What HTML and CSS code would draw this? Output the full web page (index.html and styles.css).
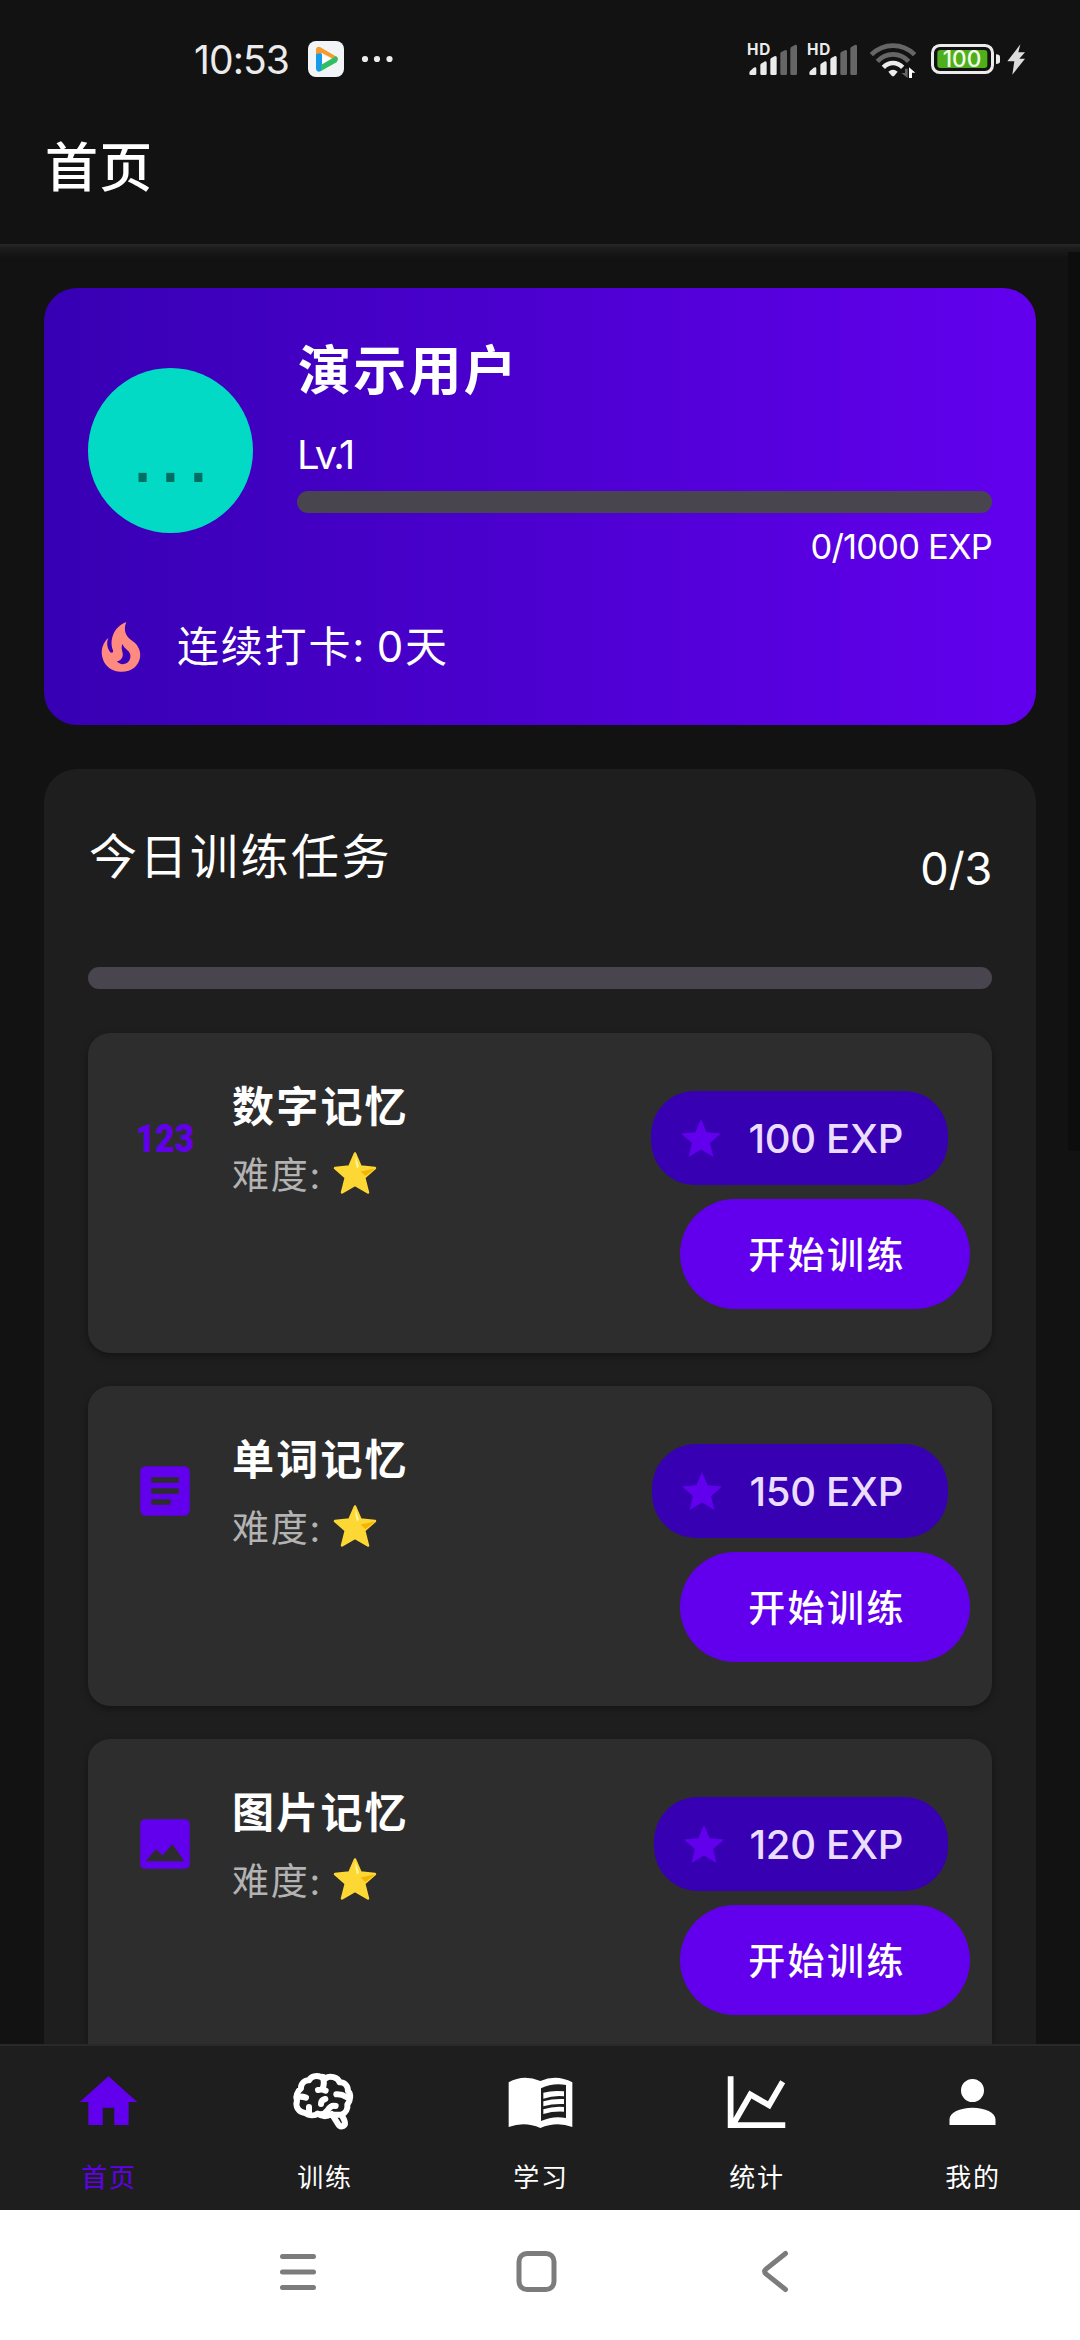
FILE: index.html
```html
<!DOCTYPE html>
<html lang="zh-CN">
<head>
<meta charset="utf-8">
<title>首页</title>
<link rel="stylesheet" href="styles.css">
</head>
<body>
<svg class="defs" width="0" height="0" aria-hidden="true">
  <symbol id="star" viewBox="0 0 24 24"><path d="M12,17.27L18.18,21L16.54,13.97L22,9.24L14.81,8.62L12,2L9.19,8.62L2,9.24L7.45,13.97L5.82,21L12,17.27Z"/></symbol>
  <symbol id="gold-star" viewBox="0 0 44 44">
    <path d="M22 2.5L27.6 15.6L42 17L31.2 26.6L35 41.5L22 34L9 41.5L12.8 26.6L2 17L16.4 15.6Z" fill="#fdd835" stroke="#fdd835" stroke-width="2.5" stroke-linejoin="round"/>
    <path d="M27.6 20.5L42 17.5L32.5 25Z" fill="#f4b400"/>
    <path d="M22.4 4.5L26 15.5L24 17.5Q22 12 22.4 4.5Z" fill="#fff59d"/>
  </symbol>
  <symbol id="signal" viewBox="0 0 150 102">
    <g fill="#ebebeb">
      <path d="M7 93Q7 89 10 86L20 77Q28 74 28 80V95Q28 99 24 99H11Q7 99 7 95Z"/>
      <path d="M40 70Q40 66 44 64L54 58Q59 58 59 62V95Q59 99 55 99H44Q40 99 40 95Z"/>
      <path d="M70 53Q70 49 74 47L84 42Q89 42 89 46V95Q89 99 85 99H74Q70 99 70 95Z"/>
    </g>
    <g fill="#666">
      <path d="M100 35Q100 31 104 29L115 24Q120 24 120 28V95Q120 99 116 99H104Q100 99 100 95Z"/>
      <path d="M130 20Q130 16 134 14L145 8Q150 8 150 12V95Q150 99 146 99H134Q130 99 130 95Z"/>
    </g>
  </symbol>
</svg>
<div class="phone">
  <header class="status">
    <span class="clock">10:53</span>
    <svg class="app-badge" viewBox="0 0 36 36">
      <rect width="36" height="36" rx="8" fill="#f1f5f8"/>
      <path d="M8 9V28Q9 32 13 30L14 28V13Z" fill="#159bea"/>
      <path d="M8 13V8Q9 5 12 6L29 16Q31 18 29 20L14 12Z" fill="#f79a2b"/>
      <path d="M29 20Q31 18 28 15L13 24V30L29 21Z" fill="#2fbf62"/>
      <path d="M14 13L22.5 18L14 23Z" fill="#fff"/>
    </svg>
    <svg class="more" viewBox="0 0 32 8" fill="#ebebeb"><circle cx="4" cy="4" r="3.1"/><circle cx="16" cy="4" r="3.1"/><circle cx="28.5" cy="4" r="3.1"/></svg>
    <svg class="signal" viewBox="0 0 150 102"><use href="#signal"/><text class="hd" x="0" y="39" textLength="70">HD</text></svg>
    <svg class="signal" viewBox="0 0 150 102"><use href="#signal"/><text class="hd" x="0" y="39" textLength="70">HD</text></svg>
    <svg class="wifi" viewBox="0 0 138 108">
      <g fill="none" stroke-width="14">
        <path d="M4 38Q32 11 69 11Q106 11 134 38" stroke="#666"/>
        <path d="M22 58Q42 37 69 37Q96 37 116 58" stroke="#666"/>
        <path d="M40 76Q53 63 69 63Q85 63 98 76" stroke="#ebebeb"/>
      </g>
      <path d="M55 89Q69 77 83 89L73 101Q69 104 65 101Z" fill="#ebebeb"/>
      <path d="M105 80H113V108L94 93H105Z" fill="#666"/>
      <path d="M117 108V76L136 92H126V108Z" fill="#fff"/>
    </svg>
    <svg class="battery" viewBox="0 0 207 90">
      <rect x="4.500" y="4.500" width="180" height="81" rx="22" fill="none" stroke="#ebebeb" stroke-width="9"/>
      <rect x="19" y="18" width="150" height="54" rx="9" fill="#4fae1c"/>
      <path d="M195 31Q207 31 207 39V52Q207 60 195 60Z" fill="#ebebeb"/>
      <text class="battery-level" x="93" y="70" text-anchor="middle" textLength="116">100</text>
    </svg>
    <svg class="bolt" viewBox="0 0 54 91"><path d="M40 0L1 51H22L16 91L54 43H37L54 24H34Z" fill="#dcdcdc"/></svg>
  </header>
  <div class="appbar"><h1>首页</h1></div>
  <main class="content">
    <section class="profile">
      <div class="profile-top">
        <div class="avatar">...</div>
        <div class="profile-info">
          <h2 class="name">演示用户</h2>
          <div class="level">Lv.1</div>
          <div class="track"></div>
          <div class="exp">0/1000 EXP</div>
        </div>
      </div>
      <div class="streak">
        <svg class="icon66" viewBox="0 0 24 24" fill="#ff8a80"><path d="M17.66 11.2C17.43 10.9 17.15 10.64 16.89 10.38C16.22 9.78 15.46 9.35 14.82 8.72C13.33 7.26 13 4.85 13.95 3C13 3.23 12.17 3.75 11.46 4.32C8.87 6.4 7.85 10.07 9.07 13.22C9.11 13.32 9.15 13.42 9.15 13.55C9.15 13.77 9 13.97 8.8 14.05C8.57 14.15 8.33 14.09 8.14 13.93C8.08 13.88 8.04 13.83 8 13.76C6.87 12.33 6.69 10.28 7.45 8.64C5.78 10 4.87 12.3 5 14.47C5.06 14.97 5.12 15.47 5.29 15.97C5.43 16.57 5.7 17.17 6 17.7C7.08 19.43 8.95 20.67 10.96 20.92C13.1 21.19 15.39 20.8 17.03 19.32C18.86 17.66 19.5 15 18.56 12.72L18.43 12.46C18.22 12 17.66 11.2 17.66 11.2M14.5 17.5C14.22 17.74 13.76 18 13.4 18.1C12.28 18.5 11.16 17.94 10.5 17.28C11.69 17 12.4 16.12 12.61 15.23C12.78 14.43 12.46 13.77 12.33 13C12.21 12.26 12.23 11.63 12.5 10.94C12.69 11.32 12.89 11.7 13.13 12C13.9 13 15.11 13.44 15.37 14.8C15.41 14.94 15.43 15.08 15.43 15.23C15.46 16.05 15.1 16.95 14.5 17.5Z"/></svg>
        <span>连续打卡: 0天</span>
      </div>
    </section>
    <section class="tasks">
      <div class="tasks-head"><h2>今日训练任务</h2><span class="count">0/3</span></div>
      <div class="track"></div>
      <div class="task-list">
        <article class="task">
          <svg class="icon66" viewBox="0 0 66 66"><text class="digits" x="4" y="47" textLength="58" lengthAdjust="spacingAndGlyphs">123</text></svg>
          <div class="task-text"><h3>数字记忆</h3><p>难度:<svg class="gold"><use href="#gold-star"/></svg></p></div>
          <div class="task-actions">
            <div class="chip"><svg><use href="#star"/></svg><span>100 EXP</span></div>
            <button class="start">开始训练</button>
          </div>
        </article>
        <article class="task">
          <svg class="icon66" viewBox="0 0 24 24" fill="#6200ee"><path d="M14,17H7V15H14M17,13H7V11H17M17,9H7V7H17M19,3H5C3.89,3 3,3.89 3,5V19A2,2 0 0,0 5,21H19A2,2 0 0,0 21,19V5C21,3.89 20.1,3 19,3Z"/></svg>
          <div class="task-text"><h3>单词记忆</h3><p>难度:<svg class="gold"><use href="#gold-star"/></svg></p></div>
          <div class="task-actions">
            <div class="chip chip-150"><svg><use href="#star"/></svg><span>150 EXP</span></div>
            <button class="start">开始训练</button>
          </div>
        </article>
        <article class="task task-last">
          <svg class="icon66" viewBox="0 0 24 24" fill="#6200ee"><path fill-rule="evenodd" d="M5 3H19Q21 3 21 5V19Q21 21 19 21H5Q3 21 3 19V5Q3 3 5 3ZM5 18.3H19L14.7 12L11.1 16.2L8.7 13.9Z"/></svg>
          <div class="task-text"><h3>图片记忆</h3><p>难度:<svg class="gold"><use href="#gold-star"/></svg></p></div>
          <div class="task-actions">
            <div class="chip chip-120"><svg><use href="#star"/></svg><span>120 EXP</span></div>
            <button class="start">开始训练</button>
          </div>
        </article>
      </div>
    </section>
    <div class="edge"></div>
  </main>
  <nav class="tabs">
    <a class="tab active"><svg class="tab-icon" viewBox="0 0 24 24"><path d="M10,20V14H14V20H19V12H22L12,3L2,12H5V20H10Z"/></svg><span>首页</span></a>
    <a class="tab"><svg class="tab-icon wide" viewBox="0 0 270 252">
      <g fill="none" stroke="#fff" stroke-width="18" stroke-linecap="round" stroke-linejoin="round">
        <path d="M126 51C112 45 96 49 90 61C76 61 65 71 66 85C53 95 50 110 54 122C48 141 59 157 78 159C90 167 106 169 116 161C130 171 146 169 158 162L176 190Q182 202 193 198Q201 193 196 181L188 164C201 158 207 146 205 134C216 120 216 101 207 93C207 77 196 67 182 67C176 51 152 45 140 55Q132 49 126 51Z"/>
        <path d="M132 54Q138 72 130 86M117 90L129 88L140 92M53 111Q68 108 81 113M90 141V156M172 103Q188 102 202 111M139 117Q126 120 126 132M116 162Q136 166 146 150Q156 134 170 138M156 164L188 164"/>
      </g></svg><span>训练</span></a>
    <a class="tab"><svg class="tab-icon wide" viewBox="0 0 276 252">
      <path d="M44 67Q88 42 139 63Q188 42 235 67V201Q188 183 139 204Q92 183 44 201Z" fill="#fff"/>
      <path d="M141 85Q176 68 216 75V174Q178 166 141 183Z" fill="#1e1e1e"/>
      <path d="M148 98Q178 90 210 94V109Q178 106 148 116ZM148 124Q178 115 210 117V132Q178 130 148 139ZM148 148Q178 138 210 141V155Q178 153 148 162Z" fill="#fff"/></svg><span>学习</span></a>
    <a class="tab"><svg class="tab-icon" viewBox="0 0 24 24"><path d="M16,11.78L20.24,4.45L21.97,5.45L16.74,14.5L10.23,10.75L5.46,19H22V21H2V3H4V17.54L9.5,8L16,11.78Z"/></svg><span>统计</span></a>
    <a class="tab"><svg class="tab-icon" viewBox="0 0 24 24"><path d="M12,4A4,4 0 0,1 16,8A4,4 0 0,1 12,12A4,4 0 0,1 8,8A4,4 0 0,1 12,4M12,14C16.42,14 20,15.79 20,18V20H4V18C4,15.79 7.58,14 12,14Z"/></svg><span>我的</span></a>
  </nav>
  <footer class="sysnav">
    <svg viewBox="0 0 48 48"><path d="M5.500 8.500H36.500M5.500 24H36.500M5.500 39.500H36.500"/></svg>
    <svg viewBox="0 0 48 48"><rect x="4" y="5.500" width="35" height="36" rx="8"/></svg>
    <svg viewBox="0 0 48 48"><path d="M32.500 5.500L13 21Q10.500 23.500 13 26L32.500 41.500"/></svg>
  </footer>
</div>
</body>
</html>
```
FILE: styles.css
```css
* { box-sizing: border-box; margin: 0; padding: 0; }
body {
  width: 1080px;
  height: 2340px;
  overflow: hidden;
  background: #121212;
  color: #fff;
  font-family: Inter, "Noto Sans CJK SC", sans-serif;
}
svg { display: block; flex: none; overflow: visible; }
.defs { position: absolute; }
.phone { display: flex; flex-direction: column; width: 1080px; height: 2340px; }

/* Status bar */
.status { display: flex; align-items: center; height: 118px; padding-left: 194px; flex: none; }
.clock { width: 114px; padding-top: 2px; font-size: 39px; line-height: 50px; letter-spacing: -0.900px; color: #ebebeb; white-space: nowrap; }
.app-badge { width: 36px; height: 36px; }
.more { width: 32px; height: 8px; margin: 0 354px 0 17px; }
.signal { width: 50px; height: 34px; margin-right: 10px; }
.wifi { width: 46px; height: 36px; margin: 2px 15px 0 3px; }
.battery { width: 69px; height: 30px; margin-right: 7px; }
.bolt { width: 18px; height: 31px; }
.hd { font: 700 46px Inter, sans-serif; fill: #ebebeb; }
.battery-level { font: 500 68px Inter, sans-serif; fill: #f0ffe8; }

/* App bar */
.appbar { height: 126px; padding: 15px 0 0 45px; flex: none; }
.appbar h1 { font-size: 53px; font-weight: 500; line-height: 70px; letter-spacing: 1.200px; }

.content {
  position: relative;
  height: 1800px;
  flex: none;
  padding: 44px 44px 0;
  overflow: hidden;
  background: linear-gradient(#282828 0, #1c1c1c 4px, #121212 14px);
}
/* Scroll edge along the right side */
.edge { position: absolute; right: 0; top: 8px; width: 12px; height: 899px; background: #0d0d0d; }

.track { height: 22px; border-radius: 11px; background: #49454f; }

/* Profile card */
.profile {
  height: 437px;
  padding: 44px;
  border-radius: 33px;
  background: linear-gradient(90deg, #3700b3, #6200ee);
}
.profile-top { display: flex; align-items: center; gap: 44px; height: 237px; }
.avatar {
  width: 165px;
  height: 165px;
  margin-top: -1px;
  border-radius: 50%;
  background: #03dac6;
  color: #026d63;
  font: 400 85px/169px "Liberation Sans", Arial, sans-serif;
  letter-spacing: 4.300px;
  text-align: center;
  padding-left: 4px;
}
.profile-info { flex: 1; height: 237px; }
.name { padding: 3px 0 0 1px; font-size: 53px; font-weight: 700; line-height: 73px; letter-spacing: 2.200px; }
.level { margin-top: 22px; font-size: 40px; line-height: 50px; letter-spacing: -2.200px; }
.profile-info .track { margin-top: 11px; }
.exp { margin-top: 14px; font-size: 34.500px; line-height: 40px; text-align: right; letter-spacing: -0.800px; }
.streak { display: flex; align-items: center; gap: 23px; height: 66px; margin-top: 45px; font-size: 42px; letter-spacing: 1.800px; }
.streak span { line-height: 60px; word-spacing: -3px; }

/* Daily tasks */
.tasks { height: 1400px; margin-top: 44px; padding: 44px; border-radius: 33px; background: #1e1e1e; }
.tasks-head { display: flex; justify-content: space-between; height: 154px; }
.tasks-head h2 { margin: 14px 0 0 1px; font-size: 48px; font-weight: 400; line-height: 60px; letter-spacing: 2.500px; }
.count { margin-top: 31px; font-size: 45px; line-height: 50px; letter-spacing: -0.200px; }
.task-list { display: flex; flex-direction: column; gap: 33px; margin-top: 44px; }
.task {
  display: flex;
  height: 320px;
  padding: 44px 22px 44px 44px;
  border-radius: 22px;
  background: #2d2d2d;
  box-shadow: 0 3px 7px rgba(0, 0, 0, 0.35);
}
.task-last { height: 360px; }
.icon66 { width: 66px; height: 66px; }
.task .icon66 { margin-top: 28px; }
.digits { font: 900 39px Roboto, sans-serif; fill: #6200ee; }
.task-text { flex: 1; padding: 2px 0 0 34px; }
.task h3 { font-size: 42px; font-weight: 700; line-height: 56px; letter-spacing: 2.200px; }
.task p { display: flex; align-items: center; height: 66px; margin-top: 5px; font-size: 37px; letter-spacing: 1.700px; color: #b3b3b3; }
.gold { width: 44px; height: 44px; margin-left: 11px; }
.task-actions { display: flex; flex-direction: column; align-items: flex-end; padding-top: 14px; gap: 14px; }
.chip {
  display: flex;
  align-items: center;
  justify-content: space-between;
  width: 297px;
  height: 94px;
  margin-right: 22px;
  padding: 1px 45px 0 26px;
  border-radius: 44px;
  background: #3700b3;
  color: #eaddff;
  font-size: 40px;
  font-weight: 500;
  letter-spacing: -0.300px;
  white-space: nowrap;
}
.chip svg { width: 48px; height: 48px; fill: #6200ee; }
.chip-150 { width: 296px; }
.chip-120 { width: 294px; }
.start {
  width: 290px;
  height: 110px;
  padding: 0 0 2px 4px;
  border: 0;
  border-radius: 55px;
  background: #6200ee;
  color: #fff;
  font: 500 37px Inter, "Noto Sans CJK SC", sans-serif;
  letter-spacing: 2.400px;
}

/* Bottom tabs */
.tabs { display: flex; height: 166px; flex: none; border-top: 2px solid #292929; background: #1e1e1e; }
.tab { flex: 1; display: flex; flex-direction: column; align-items: center; fill: #fff; font-size: 26px; line-height: 34px; letter-spacing: 1.700px; }
.tab span { margin-top: 17px; padding-left: 2px; }
.tab-icon { width: 69px; height: 84px; margin-top: 14px; }
.tab-icon.wide { width: 92px; height: 84px; }
.tab.active { fill: #6200ee; color: #6200ee; }

/* System navigation */
.sysnav { display: flex; gap: 190px; flex: 1; padding: 38px 0 0 277px; background: #fff; }
.sysnav svg { width: 48px; height: 48px; fill: none; stroke: #7c7c7c; stroke-width: 5; stroke-linecap: round; }
```
